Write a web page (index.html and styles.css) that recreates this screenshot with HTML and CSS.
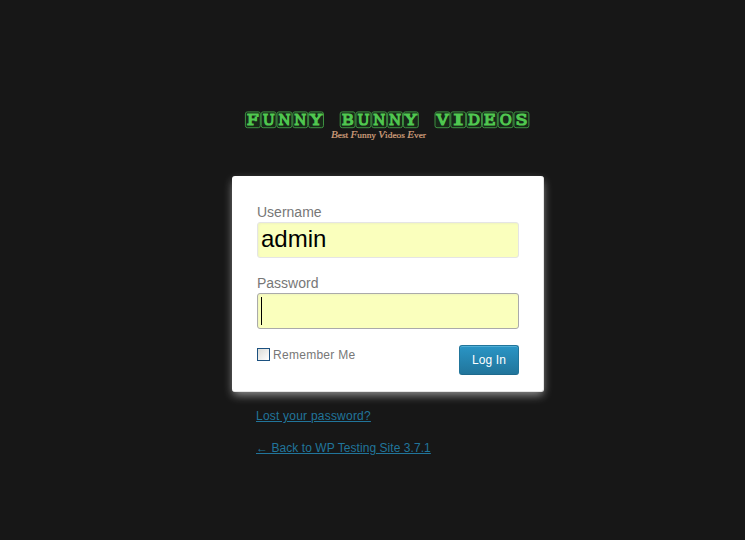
FILE: index.html
```
<!DOCTYPE html>
<html lang="en">
<head>
<meta charset="utf-8">
<title>Log In</title>
<link rel="stylesheet" href="styles.css">
</head>
<body>
<main class="login">
  <svg class="logo" width="312" height="36" viewBox="232 108 312 36" role="img" aria-label="Funny Bunny Videos">
    <g class="tiles" id="tiles"></g>
    <text class="tagline" x="331" y="137.5" textLength="95" lengthAdjust="spacingAndGlyphs"><tspan class="cap">B</tspan>est <tspan class="cap">F</tspan>unny <tspan class="cap">V</tspan>ideos <tspan class="cap">E</tspan>ver</text>
  </svg>
  <form class="card">
    <label class="label" for="user">Username</label>
    <input class="field" id="user" type="text" value="admin">
    <label class="label" for="pass">Password</label>
    <div class="field focused" id="pass"><span class="caret"></span></div>
    <div class="actions">
      <label class="remember"><span class="check"></span><span>Remember Me</span></label>
      <button class="submit" type="button">Log In</button>
    </div>
  </form>
  <nav class="links">
    <a href="#">Lost your password?</a>
    <a class="back" href="#">← Back to WP Testing Site 3.7.1</a>
  </nav>
</main>
<script src="logo.js"></script>
</body>
</html>
```
FILE: logo.js
```
const ns = "http://www.w3.org/2000/svg";
const tiles = document.getElementById("tiles");
const pitch = 15.8;
[..."FUNNY BUNNY VIDEOS"].forEach((letter, i) => {
  if (letter === " ") return;
  const x = 245 + i * pitch;
  const rect = document.createElementNS(ns, "rect");
  for (const [k, v] of Object.entries({ x: x + 0.4, y: 111.9, width: 14.9, height: 15.8, rx: 2 })) rect.setAttribute(k, v);
  const text = document.createElementNS(ns, "text");
  const w = letter === "I" ? 10 : 12;
  for (const [k, v] of Object.entries({ x: x + 7.85 - w / 2, y: 125.3, textLength: w, lengthAdjust: "spacingAndGlyphs" })) text.setAttribute(k, v);
  text.textContent = letter;
  tiles.append(rect, text);
});
```
FILE: styles.css
```
* { box-sizing: border-box; }
body {
  margin: 0;
  min-height: 540px;
  background: #171717;
  font-family: "Liberation Sans", Arial, sans-serif;
  color: #777;
}
.login {
  width: 312px;
  margin-left: 232px;
  padding-top: 108px;
}
.logo { display: block; }
.tiles rect { fill: #182719; stroke: #3c9040; stroke-width: 1; }
.tiles text {
  font: 15.5px "DejaVu Serif", serif;
  fill: #50c850;
  stroke: #50c850;
  stroke-width: 1.2;
}
.tagline { font: 8.5px "Liberation Serif", serif; fill: #d5a17f; stroke: #d5a17f; stroke-width: .2; }
.cap { font-size: 10px; font-style: italic; }
.card {
  height: 216px;
  margin-top: 32px;
  padding: 27px 24px 0 25px;
  background: #fff;
  border: 1px solid #e5e5e5;
  border-width: 0 1px 1px 0;
  border-radius: 3px;
  box-shadow: 0 4px 10px -1px rgba(200, 200, 200, .7);
}
.label {
  display: block;
  height: 19px;
  font-size: 14px;
  line-height: 18px;
}
.field {
  display: block;
  width: 262px;
  height: 36px;
  margin: 0 0 16px;
  padding: 0 3px 2px;
  border: 1px solid #e5e5e5;
  border-radius: 3px;
  background: #faffbd;
  box-shadow: inset 1px 1px 2px rgba(200, 200, 200, .2);
  font: 24px "Liberation Sans", Arial, sans-serif;
  color: #000;
  outline: none;
}
.focused { border-color: #aaa; padding: 3px; }
.caret { display: block; width: 1px; height: 28px; background: #000; }
.actions {
  display: flex;
  justify-content: space-between;
  align-items: flex-start;
}
.remember {
  display: flex;
  gap: 3px;
  padding-top: 3px;
  font-size: 12px;
  line-height: 14px;
  letter-spacing: .28px;
}
.check {
  width: 13px;
  height: 13px;
  border: 1px solid #1c5180;
  background: linear-gradient(135deg, #dcdcd7, #fff);
}
.submit {
  width: 60px;
  height: 30px;
  padding: 0;
  border: 1px solid #21759b;
  border-bottom-color: #1e6a8d;
  border-radius: 3px;
  background: linear-gradient(#2a95c5, #21759b);
  box-shadow: inset 0 1px 0 rgba(120, 200, 230, .5);
  font: 12px "Liberation Sans", Arial, sans-serif;
  letter-spacing: .1px;
  color: #fff;
}
.links {
  display: flex;
  flex-direction: column;
  align-items: flex-start;
  gap: 16px;
  padding: 16px 0 0 24px;
  font-size: 12px;
  line-height: 16px;
}
.links a { color: #21759b; letter-spacing: .22px; }
.links .back { letter-spacing: .06px; }
```
